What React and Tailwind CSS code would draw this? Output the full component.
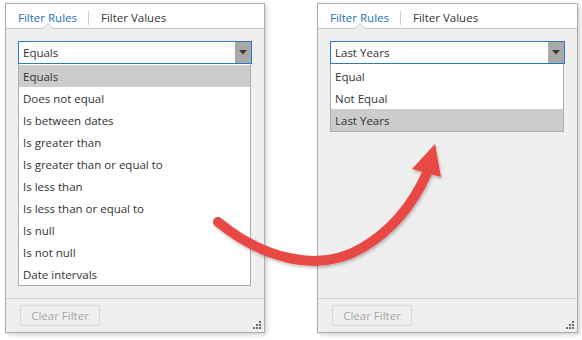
import React from "react";

const font = { fontFamily: '"Open Sans", "Noto Sans", sans-serif' };

function Grip() {
  const dots = [
    [6, 0],
    [3, 3], [6, 3],
    [0, 6], [3, 6], [6, 6],
  ];
  return (
    <svg className="absolute right-[3px] bottom-[3px]" width="8" height="8" viewBox="0 0 8 8">
      {dots.map(([x, y], i) => (
        <rect key={i} x={x} y={y} width="2" height="2" fill="#6b6b6b" />
      ))}
    </svg>
  );
}

function Panel({ width, value, items, selected }) {
  return (
    <div
      className="relative flex flex-col h-[330px] border border-[#acacac] bg-[#efefef] shadow-[2px_2px_4px_rgba(0,0,0,0.18)]"
      style={{ width }}
    >
      <div className="relative h-[25px] bg-white border-b border-[#c9c9c9] flex items-center pl-[12px] pt-[3px] text-[11.5px]">
        <span className="text-[#1e72bd]">Filter Rules</span>
        <span className="w-px h-[14px] bg-[#d0d0d0] ml-[11px] mr-[12px]" />
        <span className="text-[#333333]">Filter Values</span>
        <svg className="absolute left-[37px] bottom-[-1px]" width="10" height="6" viewBox="0 0 10 6">
          <path d="M0 5.5 L5 0.5 L10 5.5" fill="#efefef" stroke="#c9c9c9" strokeWidth="1" />
          <rect x="0" y="5" width="10" height="1" fill="#efefef" />
        </svg>
      </div>
      <div className="flex-1 px-[12px] pt-[12px]">
        <div className="flex h-[23px] border border-[#2a78c6] bg-white">
          <div className="flex-1 flex items-center pl-[4px] pt-[1px] text-[11.5px] text-[#333333]">{value}</div>
          <div className="w-[16px] bg-[#a9a9a9] flex items-center justify-center">
            <svg width="8" height="5" viewBox="0 0 8 5">
              <path d="M0 0 H8 L4 4.5 Z" fill="#3a3a3a" />
            </svg>
          </div>
        </div>
        <div className="mr-[1px] pt-[1px] border border-[#adadad] border-t-0 bg-white">
          {items.map((it) => (
            <div
              key={it}
              className={`h-[22px] flex items-center pl-[4px] pt-[1px] text-[11.5px] text-[#333333] ${
                it === selected ? "bg-[#cccccc]" : ""
              }`}
            >
              {it}
            </div>
          ))}
        </div>
      </div>
      <div className="h-[34px] border-t border-[#d2d2d2] pl-[14px] pt-[6px]">
        <div className="w-[80px] h-[21px] border border-[#d8d8d8] flex items-center justify-center text-[11.5px] text-[#a5a5a5]">
          Clear Filter
        </div>
      </div>
      <Grip />
    </div>
  );
}

export default function App() {
  const leftItems = [
    "Equals",
    "Does not equal",
    "Is between dates",
    "Is greater than",
    "Is greater than or equal to",
    "Is less than",
    "Is less than or equal to",
    "Is null",
    "Is not null",
    "Date intervals",
  ];
  const rightItems = ["Equal", "Not Equal", "Last Years"];
  return (
    <div className="relative w-[582px] h-[340px] bg-white overflow-hidden" style={font}>
      <div className="flex pt-[3px] pl-[5px] gap-[52px]">
        <Panel width={260} value="Equals" items={leftItems} selected="Equals" />
        <Panel width={261} value="Last Years" items={rightItems} selected="Last Years" />
      </div>
      <svg className="absolute left-0 top-0" width="582" height="340" viewBox="0 0 582 340">
        <defs>
          <filter id="sh" x="-10%" y="-10%" width="120%" height="120%">
            <feDropShadow dx="1" dy="2" stdDeviation="1.5" floodColor="#000" floodOpacity="0.25" />
          </filter>
        </defs>
        <g filter="url(#sh)">
          <path
            d="M218 222 C 262 258 318 274 362 248 C 393 230 414 202 427 173"
            fill="none"
            stroke="#e84a45"
            strokeWidth="10"
            strokeLinecap="round"
          />
          <path d="M435 144 L441 177 L412 169 Z" fill="#e84a45" />
        </g>
      </svg>
    </div>
  );
}
